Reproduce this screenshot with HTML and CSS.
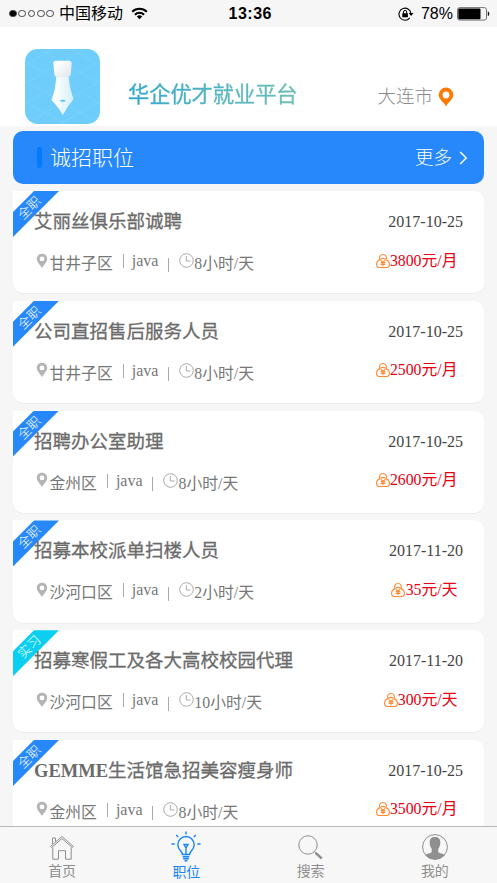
FILE: index.html
```html
<!DOCTYPE html>
<html lang="zh-CN">
<head>
<meta charset="utf-8">
<meta name="viewport" content="width=device-width, initial-scale=1">
<title>华企优才就业平台</title>
<link rel="stylesheet" href="styles.css">
</head>
<body>
<svg class="defs" aria-hidden="true">
  <symbol id="pin" viewBox="0 0 12 16"><path fill-rule="evenodd" d="M6 .8C2.900.8.8 3 .8 5.800.8 9.200 4 11.500 6 15c2-3.500 5.200-5.800 5.200-9.200C11.200 3 9.100.8 6 .8ZM6 3.500a2.400 2.400 0 1 1 0 4.800 2.400 2.400 0 0 1 0-4.800Z"/></symbol>
  <symbol id="clock" viewBox="0 0 15 15"><circle cx="7.500" cy="7.500" r="6.800"/><path d="M7.300 3v5h4.200"/></symbol>
  <symbol id="bag" viewBox="0 0 15 16"><path d="M4.500 6.500C2.900 4.200 4.300 1 7.500 1s4.600 3.200 3 5.500c2.200.8 3.900 2.600 3.900 4.900 0 2.300-1.700 3.600-3.900 3.600h-6C2.300 15 .6 13.700.6 11.400c0-2.300 1.700-4.100 3.900-4.900Z"/><path d="M5 6c1.300-.8 3.700-.8 5 0M5.300 7.400l2.200 2.100 2.200-2.100M5 9.700h5M5 11.600h5M7.500 9.500v4"/></symbol>
</svg>
<div class="screen">
  <div class="status">
    <div class="dots"><i class="on"></i><i></i><i></i><i></i><i></i></div>
    <span class="carrier">中国移动</span>
    <svg class="wifi" viewBox="0 0 17 13"><path d="M1.200 4.800a10.500 10.500 0 0 1 14.600 0M3.900 7.700a6.600 6.600 0 0 1 9.200 0" fill="none" stroke="#000" stroke-width="2"/><path d="M8.500 12.300 5.800 9.600a3.900 3.900 0 0 1 5.400 0Z"/></svg>
    <b class="time">13:36</b>
    <svg class="lock" viewBox="0 0 16 14"><path d="M11.800 10.800A6 6 0 1 1 13 7" fill="none" stroke="#000" stroke-width="1.100"/><path d="M10.700 6h4.800L13.100 8.900ZM4.300 6.200h5.600v4H4.300Z"/><path d="M5.500 6.500V5a1.600 1.600 0 0 1 3.200 0v1.500" fill="none" stroke="#000"/></svg>
    <span class="pct">78%</span>
    <svg class="battery" viewBox="0 0 33 14"><rect x=".5" y=".6" width="29" height="12.500" rx="2.200" fill="none" stroke="#555" stroke-width=".8"/><rect x="1.300" y="1.500" width="22.200" height="10.700" rx="1"/><path d="M30.800 4.600c2 .5 2 4 0 4.500Z"/></svg>
  </div>
  <header class="header">
    <svg class="logo" viewBox="0 0 74 74">
      <defs>
        <clipPath id="tile"><rect width="74" height="74" rx="12.500"/></clipPath>
        <linearGradient id="nib"><stop offset=".15" stop-color="#fff"/><stop offset="1" stop-color="#d3effa"/></linearGradient>
        <linearGradient id="cap" x2="1" y2="1"><stop offset=".2" stop-color="#fff"/><stop offset="1" stop-color="#dfe5ee"/></linearGradient>
      </defs>
      <g clip-path="url(#tile)">
        <rect width="74" height="74" fill="#6fcdfb"/>
        <path d="M0 12 74 54M0 32l74 42M0 52l40 22M14 0l60 34M46 0l28 16M74 12 0 54M74 32 0 74M74 52 34 74M60 0 0 34M28 0 0 16" fill="none" stroke="#7dd3fc" stroke-width=".8"/>
      </g>
      <path d="M31 27h12l1.500 11 3.300 11.500Q42 56 37.300 65 32 56 26.200 50.500L29.500 39Z" fill="url(#nib)"/>
      <path d="M37.300 52v12" stroke="#c7eafa" stroke-width=".6"/>
      <ellipse cx="37.300" cy="51" rx="2.800" ry="1" fill="#59c3ee"/>
      <path d="M28 14q0-2.500 2.500-2.500h13Q46 11.500 46 14l-.8 11q-.2 2.500-2.700 2.500h-10.800q-2.500 0-2.700-2.500Z" fill="url(#cap)"/>
    </svg>
    <h1 class="brand">华企优才就业平台</h1>
    <span class="city">大连市</span>
    <svg class="city-pin" viewBox="0 0 16 20"><path fill-rule="evenodd" d="M8 .6A7.200 7.200 0 0 0 .7 7.700C.7 12.500 5.800 14.800 8 19.400c2.200-4.600 7.300-6.900 7.300-11.700A7.200 7.200 0 0 0 8 .6Zm0 4a3.400 3.400 0 1 1 0 6.800 3.400 3.400 0 0 1 0-6.800Z"/></svg>
  </header>
  <main class="list">
    <div class="banner">
      <i class="mark"></i><h2>诚招职位</h2><span class="more">更多</span>
      <svg class="chev" viewBox="0 0 9 14"><path d="m1.200 1 6 6-6 6"/></svg>
    </div>
    <article class="card">
      <div class="ribbon"><span>全职</span></div>
      <div class="top"><h3>艾丽丝俱乐部诚聘</h3><time>2017-10-25</time></div>
      <div class="meta"><svg class="pin"><use href="#pin"/></svg><span class="text">甘井子区</span><i class="bar"></i><span class="skill">java</span><i class="bar low"></i><svg class="clock"><use href="#clock"/></svg><span class="text">8小时/天</span><div class="pay"><svg><use href="#bag"/></svg><span>3800元/月</span></div></div>
    </article>
    <article class="card">
      <div class="ribbon"><span>全职</span></div>
      <div class="top"><h3>公司直招售后服务人员</h3><time>2017-10-25</time></div>
      <div class="meta"><svg class="pin"><use href="#pin"/></svg><span class="text">甘井子区</span><i class="bar"></i><span class="skill">java</span><i class="bar low"></i><svg class="clock"><use href="#clock"/></svg><span class="text">8小时/天</span><div class="pay"><svg><use href="#bag"/></svg><span>2500元/月</span></div></div>
    </article>
    <article class="card">
      <div class="ribbon"><span>全职</span></div>
      <div class="top"><h3>招聘办公室助理</h3><time>2017-10-25</time></div>
      <div class="meta"><svg class="pin"><use href="#pin"/></svg><span class="text">金州区</span><i class="bar"></i><span class="skill">java</span><i class="bar low"></i><svg class="clock"><use href="#clock"/></svg><span class="text">8小时/天</span><div class="pay"><svg><use href="#bag"/></svg><span>2600元/月</span></div></div>
    </article>
    <article class="card">
      <div class="ribbon"><span>全职</span></div>
      <div class="top"><h3>招募本校派单扫楼人员</h3><time>2017-11-20</time></div>
      <div class="meta"><svg class="pin"><use href="#pin"/></svg><span class="text">沙河口区</span><i class="bar"></i><span class="skill">java</span><i class="bar low"></i><svg class="clock"><use href="#clock"/></svg><span class="text">2小时/天</span><div class="pay"><svg><use href="#bag"/></svg><span>35元/天</span></div></div>
    </article>
    <article class="card">
      <div class="ribbon intern"><span>实习</span></div>
      <div class="top"><h3>招募寒假工及各大高校校园代理</h3><time>2017-11-20</time></div>
      <div class="meta"><svg class="pin"><use href="#pin"/></svg><span class="text">沙河口区</span><i class="bar"></i><span class="skill">java</span><i class="bar low"></i><svg class="clock"><use href="#clock"/></svg><span class="text">10小时/天</span><div class="pay"><svg><use href="#bag"/></svg><span>300元/天</span></div></div>
    </article>
    <article class="card">
      <div class="ribbon"><span>全职</span></div>
      <div class="top"><h3><b>GEMME</b>生活馆急招美容瘦身师</h3><time>2017-10-25</time></div>
      <div class="meta"><svg class="pin"><use href="#pin"/></svg><span class="text">金州区</span><i class="bar"></i><span class="skill">java</span><i class="bar low"></i><svg class="clock"><use href="#clock"/></svg><span class="text">8小时/天</span><div class="pay"><svg><use href="#bag"/></svg><span>3500元/月</span></div></div>
    </article>
  </main>
  <nav class="tabs">
    <a class="tab"><svg viewBox="0 0 30 32"><path d="M3.500 15.500 15 5.500l11.500 10-1.200 1L15 7.600 4.700 16.500ZM5.500 13V7h3v3.500M5.800 16.500v11.700h5.700v-8.500h7v8.500h5.700V16.500"/></svg><span>首页</span></a>
    <a class="tab active"><svg viewBox="0 0 30 32"><path d="M11.500 23.500c0-3-4.700-4.500-4.700-9.800a8.200 8.200 0 0 1 16.400 0c0 5.300-4.700 6.800-4.700 9.800ZM11.700 25.700h6.600M12.200 27.800h5.600M13.500 29.800h3M15 23v-6l-2-3.500h4L15 17M15 .5v3M5.200 4l2 2M24.800 4l-2 2M.5 13h3.200M26.300 13h3.200"/></svg><span>职位</span></a>
    <a class="tab"><svg viewBox="0 0 30 32"><circle cx="12" cy="14" r="9.200"/><path d="m18.300 20.500 1.500 1.500"/><path class="handle" d="m19.500 21.800 6.300 5.700"/></svg><span>搜索</span></a>
    <a class="tab"><svg viewBox="0 0 30 32"><circle cx="15" cy="16" r="12.400"/><path class="solid" d="M15 6c-3.500 0-5.500 2-5.300 5.500.1 3 .7 4.500 2 6.200v3.200c-1 1.500-5.200 1.500-6.500 3.200 5 5.800 14.600 5.800 19.600 0-1.300-1.700-5.500-1.700-6.500-3.200v-3.200c1.300-1.700 1.900-3.200 2-6.200C20.500 8 18.500 6 15 6Z"/></svg><span>我的</span></a>
  </nav>
</div>
</body>
</html>
```
FILE: styles.css
```css
* { box-sizing: border-box; }
body { margin: 0; background: #f6f6f6; font-family: "Liberation Serif", "Noto Sans CJK SC", serif; }
h1, h2, h3 { margin: 0; font-weight: 400; }
svg { display: block; flex: none; }
.defs { display: none; }
.screen { width: 497px; height: 883px; display: flex; flex-direction: column; overflow: hidden; }

.status { height: 27px; flex: none; display: flex; align-items: center; padding: 0 9px; font: 16px/27px Roboto, "Noto Sans CJK SC", sans-serif; color: #000; }
.dots { display: flex; gap: 1.500px; }
.dots i { width: 7.800px; height: 7.800px; border: .8px solid #444; border-radius: 50%; }
.dots .on { background: #000; }
.carrier { margin-left: 5px; line-height: 27px; }
.wifi { width: 17px; height: 13px; margin-left: 8px; }
.time { width: 45px; margin-left: 80.500px; font: 700 16px/28px "Liberation Sans", sans-serif; letter-spacing: .5px; white-space: nowrap; }
.lock { width: 16px; height: 14px; margin-left: auto; }
.pct { margin-left: 7px; font: 16px/28px "Liberation Sans", sans-serif; }
.battery { width: 33px; height: 14px; margin-left: 4px; margin-right: -2px; }

.header { height: 99px; flex: none; display: flex; align-items: flex-start; background: #fff; padding: 22px 42px 0 25px; }
.logo { width: 75px; height: 75px; }
.brand { margin: 29px 0 0 28px; font: 400 21.200px/30px "Noto Sans CJK SC", sans-serif; background: linear-gradient(90deg, #35a8cf, #70bfb4); -webkit-background-clip: text; background-clip: text; color: transparent; -webkit-text-stroke: .4px transparent; }
.city { margin: 31px 0 0 auto; font: 18.500px/30px "Noto Sans CJK SC", sans-serif; font-weight: 300; color: #8c8c8c; }
.city-pin { width: 16px; height: 20px; margin: 38px 1px 0 5px; fill: #ff7a00; }

.list { flex: 1; min-height: 0; overflow: hidden; padding: 5px 13px 0; }
.banner { height: 52.500px; display: flex; align-items: center; padding: 0 16px 0 24px; border-radius: 10px; background: #2688fa; color: #fff; font-family: "Noto Sans CJK SC", sans-serif; font-weight: 300; margin-bottom: 7.500px; }
.mark { width: 5px; height: 21px; margin-top: 1px; border-radius: 2px; background: #067aff; }
.banner h2 { margin: -2px 0 0 8px; font-size: 21px; font-weight: 300; line-height: 30px; }
.more { margin: -3px 0 0 auto; font-size: 18.500px; line-height: 30px; }
.chev { width: 9px; height: 14px; margin: 2px 0 0 7px; fill: none; stroke: #fff; stroke-width: 1.500; }

.card { position: relative; height: 102.300px; margin-bottom: 7.500px; padding: 16px 21px 0; background: #fff; border-radius: 0 10px 10px 10px; box-shadow: 0 1px 0 #ececec; overflow: hidden; }
.ribbon { position: absolute; left: 0; top: 0; width: 46px; height: 46px; background: #2688fa; clip-path: polygon(21px 0, 46px 0, 0 46px, 0 21px); display: flex; align-items: center; justify-content: center; color: #fff; }
.ribbon span { font: 13px/16px "Noto Sans CJK SC", sans-serif; font-weight: 300; transform: translate(-7px, -6.500px) rotate(-45deg); }
.intern { background: #0bcff0; }
.top { position: relative; display: flex; justify-content: space-between; height: 30px; align-items: center; }
.top h3 { font: 18.500px/30px "Liberation Serif", "Noto Sans CJK SC", serif; color: #6b6b6b; -webkit-text-stroke: .3px #6b6b6b; white-space: nowrap; }
.top b { -webkit-text-stroke: 0; }
.top time { font-size: 16px; line-height: 30px; color: #444; }
.meta { display: flex; height: 24px; align-items: center; margin-top: 14px; font-size: 15.800px; line-height: 24px; color: #777; white-space: nowrap; }
.meta .text { margin-top: 2px; }
.meta .pin { width: 12px; height: 16px; margin: -5px 1.500px 0 2px; fill: #b4b4b4; }
.bar { width: 1px; height: 14px; margin: -4px 8px 0 10px; background: #aaa; }
.bar.low { margin: 3px 10px 0 9.500px; }
.skill { margin-top: -4px; font-size: 16px; }
.clock { width: 15px; height: 15px; margin: -5px .5px 0 0; fill: none; stroke: #aaa; }
.pay { display: flex; align-items: center; margin: -5px 5.500px 0 auto; color: #e60012; }
.pay svg { width: 14px; height: 16px; margin-right: .3px; fill: none; stroke: #ff8a35; stroke-width: 1.200; }

.tabs { height: 57px; flex: none; display: grid; grid-template-columns: repeat(4, 1fr); background: #f7f7f7; border-top: 1px solid #b9b9b9; }
.tab { display: flex; flex-direction: column; align-items: center; padding-top: 4px; font: 14px/18px "Noto Sans CJK SC", sans-serif; color: #8f8f8f; }
.tab svg { width: 30px; height: 32px; margin-bottom: -2px; fill: none; stroke: currentColor; stroke-width: 1; }
.tab .handle { stroke-width: 2.400; }
.tab .solid { fill: currentColor; stroke: none; }
.tab.active { color: #1684fc; }
.tab.active svg { margin-bottom: -1px; stroke-width: 1.400; }
```
